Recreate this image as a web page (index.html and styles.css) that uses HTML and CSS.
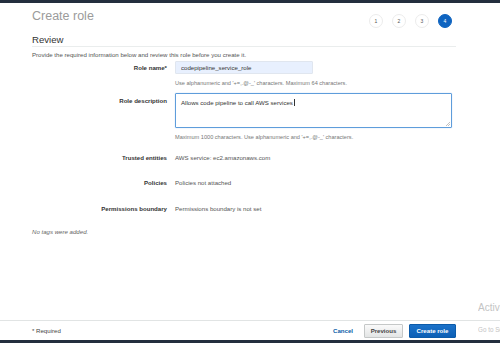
FILE: index.html
```html
<html>
  <head>
    <link rel="stylesheet" href="styles.css">
  </head>
  <body>
    <div class="topbar"></div>
    <main class="page">
      <header class="head">
        <h1 class="head__title">Create role</h1>
        <ol class="steps">
          <li class="steps__item">1</li>
          <li class="steps__item">2</li>
          <li class="steps__item">3</li>
          <li class="steps__item steps__item--active">4</li>
        </ol>
      </header>
      <h2 class="section">Review</h2>
      <p class="intro">Provide the required information below and review this role before you create it.</p>

      <div class="form">
        <div class="row row--input">
          <label class="row__label" for="roleName">Role name*</label>
          <div class="row__value">
            <input id="roleName" class="field field--name" value="codepipeline_service_role" />
            <p class="hint">Use alphanumeric and '+=,.@-_' characters. Maximum 64 characters.</p>
          </div>
        </div>
        <div class="row row--input row--desc">
          <label class="row__label" for="roleDesc">Role description</label>
          <div class="row__value">
            <div class="field field--desc" id="roleDesc">Allows code pipeline to call AWS services<span class="caret"></span>
              <svg class="grip" width="5" height="5" viewBox="0 0 5 5"><path d="M1 5L5 1M3 5L5 3" stroke="#999" stroke-width="0.6"/></svg>
            </div>
            <p class="hint">Maximum 1000 characters. Use alphanumeric and '+=,.@-_' characters.</p>
          </div>
        </div>
        <div class="row">
          <span class="row__label">Trusted entities</span>
          <span class="row__text">AWS service: ec2.amazonaws.com</span>
        </div>
        <div class="row">
          <span class="row__label">Policies</span>
          <span class="row__text">Policies not attached</span>
        </div>
        <div class="row">
          <span class="row__label">Permissions boundary</span>
          <span class="row__text">Permissions boundary is not set</span>
        </div>
      </div>

      <p class="tags">No tags were added.</p>
    </main>
    <footer class="footer">
      <span class="footer__req">* Required</span>
      <div class="footer__actions">
        <a class="btn-link" href="#cancel">Cancel</a>
        <button class="btn">Previous</button>
        <button class="btn btn--primary">Create role</button>
      </div>
    </footer>
    <div class="bottombar"></div>
    <div class="watermark">
      <span class="watermark__big">Activate Windows</span>
      <span class="watermark__small">Go to Settings to activate Windows.</span>
    </div>
  </body>
</html>
```

FILE: styles.css
```css
* {
  padding: 0;
  margin: 0;
  box-sizing: border-box;
}

html {
  font-family: "Liberation Sans", Arial, sans-serif;
  font-size: 6.1px;
  line-height: 7px;
  color: #444;
}

body {
  width: 500px;
  height: 343px;
  display: flex;
  flex-direction: column;
  overflow: hidden;
  background: #fff;
  position: relative;
}

.topbar,
.bottombar {
  height: 3px;
  background: #232f3e;
  flex: none;
}

.page {
  flex: 1;
  padding: 0 44px 0 32px;
}

/* title + wizard steps */
.head {
  display: flex;
  justify-content: space-between;
  align-items: flex-start;
  padding-top: 6px;
}

.head__title {
  font-size: 12.5px;
  line-height: 14px;
  font-weight: normal;
  color: #9b9b9b;
}

.steps {
  list-style: none;
  display: flex;
  gap: 9px;
  margin-top: 5px;
  margin-right: 4px;
}

.steps__item {
  width: 14px;
  height: 14px;
  border-radius: 50%;
  border: 1px solid #ececec;
  display: flex;
  align-items: center;
  justify-content: center;
  font-size: 5px;
  color: #555;
}

.steps__item--active {
  background: #0f64c0;
  border-color: #0f64c0;
  color: #fff;
}

.section {
  font-size: 9.6px;
  line-height: 11px;
  font-weight: normal;
  color: #333;
  margin-top: 6px;
  padding-bottom: 1px;
  border-bottom: 1px solid #eaeded;
}

.intro {
  margin-top: 4px;
  color: #555;
}

.form {
  margin-top: 3px;
}

.row {
  display: flex;
  gap: 8px;
  align-items: center;
  height: 25.3px;
}

.row--input {
  height: auto;
  align-items: flex-start;
  margin-bottom: 7px;
}

.row--desc {
  margin-bottom: 5px;
}

.row__label {
  width: 135px;
  flex: none;
  text-align: right;
  font-weight: bold;
  color: #333;
}

.row--input .row__label {
  padding-top: 3px;
}

.row--desc .row__label {
  padding-top: 4px;
}

.row__text {
  color: #555;
}

.row__value {
  flex: 1;
}

.field {
  display: block;
  font-family: inherit;
  font-size: 6.1px;
  color: #333;
  border: 1px solid #d5dbdb;
  border-radius: 1px;
  padding: 0 5px;
}

.field--name {
  width: 138px;
  height: 13px;
  background: #e8f0fe;
  border-color: #e0e6ef;
  outline: none;
}

.field--desc {
  position: relative;
  width: 277px;
  height: 35px;
  padding-top: 5px;
  border-color: #5f9ddb;
  box-shadow: 0 0 1px #8ab8e6;
}

.caret {
  display: inline-block;
  width: 0.6px;
  height: 7px;
  background: #333;
  vertical-align: -1px;
  margin-left: 1px;
}

.grip {
  position: absolute;
  right: 1px;
  bottom: 1px;
}

.hint {
  font-size: 5.6px;
  line-height: 6px;
  color: #777;
  margin-top: 6px;
}

.tags {
  font-style: italic;
  color: #666;
  margin-top: 7px;
}

.footer {
  height: 20px;
  flex: none;
  border-top: 1px solid #e1e4e4;
  display: flex;
  align-items: center;
  justify-content: space-between;
  padding: 0 44px 0 32px;
}

.footer__req {
  color: #444;
}

.footer__actions {
  display: flex;
  align-items: center;
  gap: 6px;
}

.btn-link {
  color: #0b5ea8;
  font-weight: bold;
  text-decoration: none;
  margin-right: 5px;
}

.btn {
  font-family: inherit;
  font-size: 6.1px;
  font-weight: bold;
  height: 14px;
  width: 39px;
  border: 1px solid #c5c8c8;
  border-radius: 1px;
  background: linear-gradient(#fafafa, #e3e5e5);
  color: #444;
}

.btn--primary {
  width: 47px;
  background: linear-gradient(#1b72c9, #0c5fb5);
  border-color: #0c5ba9;
  color: #fff;
}

.watermark {
  position: absolute;
  left: 478px;
  top: 302px;
  width: 22px;
  overflow: hidden;
  display: flex;
  flex-direction: column;
  white-space: nowrap;
  color: #c4c4c4;
}

.watermark__big {
  font-size: 10px;
  line-height: 11px;
}

.watermark__small {
  font-size: 6.3px;
  margin-top: 13px;
}
```
